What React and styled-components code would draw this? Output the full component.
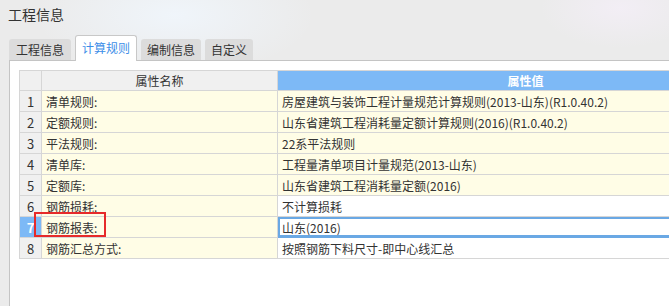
import React from "react";
import styled, { createGlobalStyle } from "styled-components";

const FONT = `"Noto Sans CJK SC", "Noto Sans", sans-serif`;
const GRID = "#d6d6d6";
const YELLOW = "#fffde6";
const BLUE = "#7db9f6";

const GlobalStyle = createGlobalStyle`
  html, body {
    margin: 0;
    padding: 0;
  }
  body {
    font-family: ${FONT};
    color: #333;
  }
`;

const Page = styled.div`
  width: 669px;
  height: 306px;
  overflow: hidden;
  display: flex;
  flex-direction: column;
  padding-left: 9px;
  box-sizing: border-box;
  background:
    radial-gradient(ellipse 140px 60px at 175px 15px, rgba(240, 246, 252, 0.9), rgba(240, 246, 252, 0) 100%),
    radial-gradient(ellipse 80px 40px at 620px 8px, rgba(243, 238, 246, 0.9), rgba(243, 238, 246, 0) 100%),
    #ebebeb;
`;

const Title = styled.div`
  font-size: 14px;
  line-height: 20px;
  padding: 4px 0 0 0;
  margin-left: -1px;
  height: 24px;
  box-sizing: border-box;
  color: #333;
`;

const TabBar = styled.div`
  display: flex;
  align-items: flex-end;
  gap: 4px;
  height: 36px;
  position: relative;
  z-index: 1;
`;

const Tab = styled.div`
  font-size: 12px;
  box-sizing: border-box;
  padding: 0 ${p => (p.$wide ? 7 : 6)}px;
  border-radius: 3px 3px 0 0;
  white-space: nowrap;
  ${p =>
    p.$active
      ? `
    height: 26px;
    line-height: 24px;
    margin-bottom: -1px;
    background: #fff;
    color: #3d8ee8;
    border: 1px solid #c8c8c8;
    border-bottom: none;
  `
      : `
    height: 21px;
    line-height: 21px;
    background: #dcdcdc;
    color: #333;
  `}
`;

const Panel = styled.div`
  flex: 1;
  background: #fff;
  border-top: 1px solid #c4c4c4;
  border-left: 1px solid #c4c4c4;
  padding: 9px 0 0 9px;
`;

const Table = styled.div`
  display: grid;
  grid-template-columns: 22px 236px 496px;
  grid-template-rows: 20px;
  grid-auto-rows: 21px;
  border-top: 1px solid ${GRID};
  border-left: 1px solid ${GRID};
  width: max-content;
  font-size: 12px;
`;

const Cell = styled.div`
  box-sizing: border-box;
  border-right: 1px solid ${GRID};
  border-bottom: 1px solid ${GRID};
  display: flex;
  align-items: center;
  white-space: nowrap;
  padding: 0 4px;
  position: relative;
  background: ${p => p.$bg || "#fff"};
`;

const HeadCell = styled(Cell)`
  justify-content: center;
  background: ${p => (p.$blue ? BLUE : "#f0f0f0")};
  color: ${p => (p.$blue ? "#fff" : "#333")};
  font-weight: ${p => (p.$blue ? "bold" : "normal")};
`;

const NumCell = styled(Cell)`
  justify-content: center;
  padding: 0;
  background: ${p => (p.$selected ? BLUE : "#f0f0f0")};
  color: ${p => (p.$selected ? "#fff" : "#333")};
  font-weight: ${p => (p.$selected ? "bold" : "normal")};
  font-size: 13px;
`;

const ValueCell = styled(Cell)`
  box-shadow: ${p => (p.$focus ? "inset 0 0 0 2px #6aa8e4" : "none")};
  border-bottom-color: ${p => (p.$focus ? "#6aa8e4" : GRID)};
`;

const Highlight = styled.span`
  position: absolute;
  left: -8px;
  top: -5px;
  width: 72px;
  height: 25px;
  box-sizing: border-box;
  border: 2px solid #e62a2a;
  pointer-events: none;
`;

const rows = [
  { name: "清单规则:", value: "房屋建筑与装饰工程计量规范计算规则(2013-山东)(R1.0.40.2)", yellow: true },
  { name: "定额规则:", value: "山东省建筑工程消耗量定额计算规则(2016)(R1.0.40.2)", yellow: true },
  { name: "平法规则:", value: "22系平法规则", yellow: true },
  { name: "清单库:", value: "工程量清单项目计量规范(2013-山东)", yellow: true },
  { name: "定额库:", value: "山东省建筑工程消耗量定额(2016)", yellow: true },
  { name: "钢筋损耗:", value: "不计算损耗" },
  { name: "钢筋报表:", value: "山东(2016)", selected: true },
  { name: "钢筋汇总方式:", value: "按照钢筋下料尺寸-即中心线汇总" },
];

const tabs = ["工程信息", "计算规则", "编制信息", "自定义"];

export default function App() {
  return (
    <Page>
      <GlobalStyle />
      <Title>工程信息</Title>
      <TabBar>
        {tabs.map((t, i) => (
          <Tab key={t} $active={i === 1} $wide={i === 0}>
            {t}
          </Tab>
        ))}
      </TabBar>
      <Panel>
        <Table>
          <HeadCell />
          <HeadCell>属性名称</HeadCell>
          <HeadCell $blue>属性值</HeadCell>
          {rows.map((r, i) => (
            <React.Fragment key={i}>
              <NumCell $selected={r.selected}>{i + 1}</NumCell>
              <Cell $bg={YELLOW}>
                {r.name}
                {r.selected && <Highlight />}
              </Cell>
              <ValueCell $bg={r.yellow ? YELLOW : "#fff"} $focus={r.selected}>
                {r.value}
              </ValueCell>
            </React.Fragment>
          ))}
        </Table>
      </Panel>
    </Page>
  );
}
